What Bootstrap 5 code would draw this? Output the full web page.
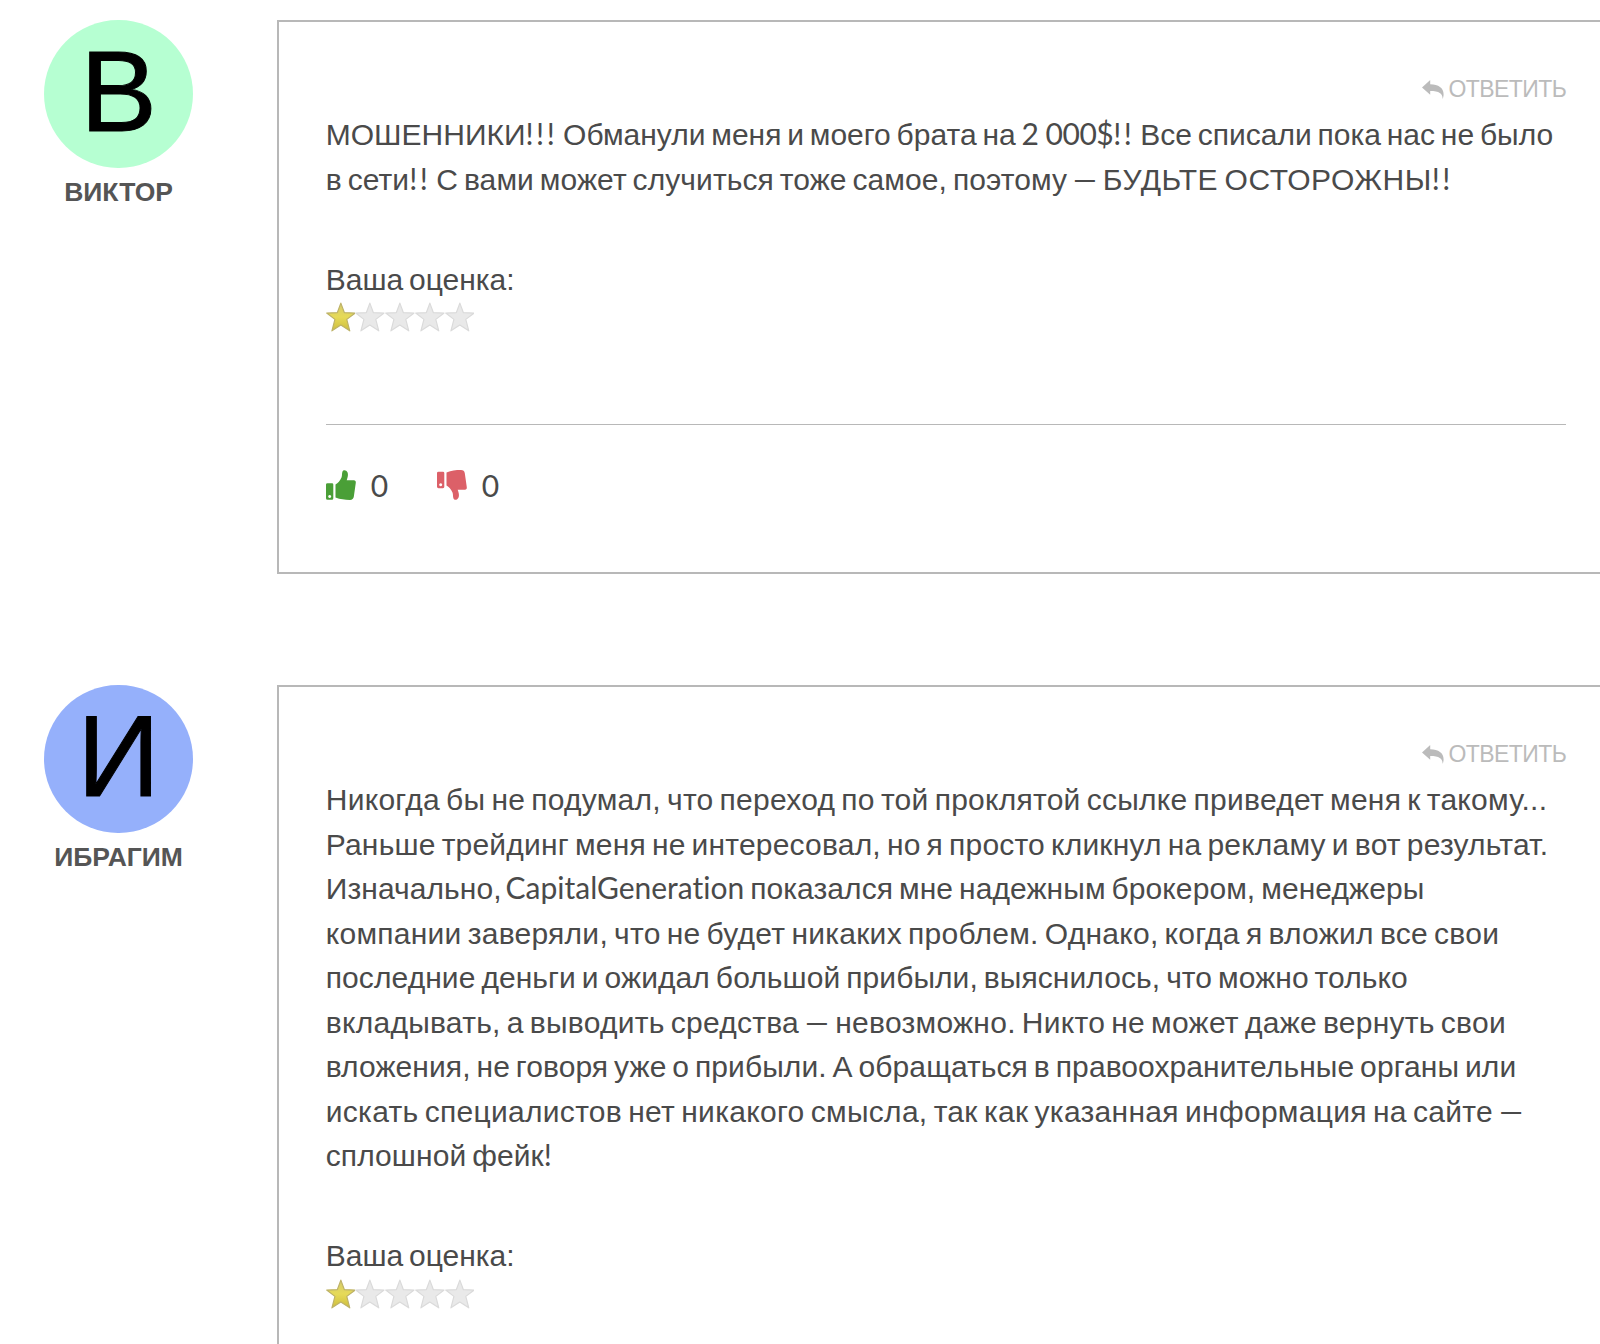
<!DOCTYPE html>
<html lang="ru">
<head>
  <meta charset="UTF-8" />
  <title>Отзывы</title>

  <!-- Bootstrap CSS -->
  <link
    href="https://cdn.jsdelivr.net/npm/bootstrap@5.3.3/dist/css/bootstrap.min.css"
    rel="stylesheet"
  />

  <style>
    html, body {
      height: 100%;
      overflow: hidden;
    }
    body {
      font-family: "Liberation Sans", Arial, sans-serif;
      font-size: 30px;
      line-height: 44.5px;
      color: #4a4a4a;
    }
    .icon-defs { position: absolute; width: 0; height: 0; }
    .review-list {
      padding: 19.6px 0 0 44.4px;
      gap: 110.6px;
    }
    .review-author {
      width: 148.4px;
      margin-right: 84.6px;
    }
    .avatar {
      width: 148.4px;
      height: 148.4px;
      font-size: 115px;
      line-height: 142px;
      color: #000;
      -webkit-text-stroke: 1px #000;
    }
    .avatar-green { background: #b6ffd2; }
    .avatar-blue { background: #95b0fb; }
    .author-name {
      font-size: 26.5px;
      line-height: 30px;
      margin-top: 9px;
      color: #555;
    }
    .review-box {
      width: 1340px;
      height: 554.4px;
      padding: 46px 0 0 46.4px;
      border: 2px solid #b8b8b8;
    }
    .review-box.tall { height: 659.4px; }
    .review-inner { width: 1240.6px; }
    .reply-link {
      height: 45.5px;
      padding-bottom: 2px;
      font-size: 23px;
      letter-spacing: -0.55px;
      color: #bbb;
    }
    .reply-link svg { width: 22px; height: 19px; margin-right: 4px; }
    .review-text, .rating { word-spacing: -2.5px; }
    .review-text > span { display: block; height: 44.5px; white-space: nowrap; }
    .latin {
      font-family: Lato, sans-serif;
      font-weight: 400;
      line-height: 1;
      font-variant-ligatures: none;
    }
    .brand { letter-spacing: 0; margin-left: -2px; }
    .bang { letter-spacing: 2.5px; }
    .digits { letter-spacing: -0.5px; word-spacing: 0; }
    .caps { letter-spacing: 0.55px; }
    .ls-1 { letter-spacing: 0.08px; }
    .ls-2 { letter-spacing: 0.2px; }
    .ls-3 { letter-spacing: 0.26px; }
    .ls-4 { letter-spacing: 0.3px; }
    .rating { margin-top: 55.5px; }
    .stars { height: 30px; }
    .stars svg { width: 29.7px; height: 30px; }
    .votes {
      margin-top: 91.5px;
      padding-top: 45px;
      border-top: 1px solid #b8b8b8;
    }
    .votes svg { width: 30px; height: 30px; margin-right: 15px; }
    .vote-count { width: 66px; }
  </style>
</head>
<body class="bg-white">
  <!-- Shared icons -->
  <svg class="icon-defs">
    <defs>
      <linearGradient id="gold" x1="0" y1="0" x2="0" y2="1">
        <stop offset="0" stop-color="#d5cb6c" />
        <stop offset="0.5" stop-color="#e6da58" />
        <stop offset="1" stop-color="#cdbd3c" />
      </linearGradient>
    </defs>
    <symbol id="star" viewBox="0 0 30 30">
      <path d="M15 1l3.500 9.500 11 .500-8.500 6.400L24 29l-9-6-9 6 3-11.600L.700 11l10.800-.500z" stroke-width="1.200" stroke-linejoin="round" />
    </symbol>
    <symbol id="reply" viewBox="0 0 22 19">
      <path d="M0 7.400L8.200 0v4.200C16.500 4.200 21.600 8 21.600 14.200c0 1.900-.4 3.400-1 4.800.2-5.300-3.500-7.900-12.400-7.900v3.700z" />
    </symbol>
    <symbol id="thumb-up" viewBox="0 0 30 30">
      <path fill-rule="evenodd" d="M1.500 13.300h4.500q1.300 0 1.300 1.300v13.600q0 1.500-1.300 1.500H1.500Q0 29.700 0 28.200V14.600q0-1.300 1.500-1.300zM3.700 24.900a1.500 1.500 0 1 0 .01 0z" />
      <path d="M9.500 14.500C12 13 14 11 15.500 7.500c.8-2 .2-4 1-6C17.100 0 19 0 20.200.8c2.200 1.500 2.300 5 .5 9.500h7.200c1.400 0 2.100 1.100 1.900 2.500l-2 14c-.3 2-1.600 3.100-3.800 3.100-5.500 0-9.500-.6-14.500-2.400z" />
    </symbol>
    <symbol id="thumb-down" viewBox="0 0 30 30">
      <path fill-rule="evenodd" d="M1.500 1.800h4.500q1.300 0 1.300 1.300v13.700q0 1.400-1.300 1.400H1.500Q0 18.200 0 16.800V3.100q0-1.300 1.500-1.300zM3.700 13.300a1.500 1.500 0 1 0 .01 0z" />
      <path transform="matrix(1 0 0 -1 0 30)" d="M9.500 14.500C12 13 14 11 15.500 7.500c.8-2 .2-4 1-6C17.100 0 19 0 20.200.8c2.200 1.500 2.300 5 .5 9.500h7.200c1.400 0 2.100 1.100 1.900 2.500l-2 14c-.3 2-1.600 3.100-3.800 3.100-5.500 0-9.500-.6-14.500-2.400z" />
    </symbol>
  </svg>

  <div class="review-list d-flex flex-column">
    <div class="d-flex align-items-start">
      <div class="review-author flex-shrink-0 text-center">
        <div class="avatar avatar-green rounded-circle">В</div>
        <div class="author-name fw-bold text-uppercase">Виктор</div>
      </div>
      <div class="review-box flex-shrink-0">
        <div class="review-inner">
          <div class="reply-link d-flex justify-content-end align-items-center text-uppercase">
            <svg fill="currentColor"><use href="#reply" /></svg>Ответить
          </div>
          <div class="review-text">
            <span>МОШЕННИКИ<b class="latin bang">!!!</b> Обманули меня и моего брата на <b class="latin digits">2 000$</b><b class="latin bang">!!</b> Все списали пока нас не было</span>
            <span class="ls-1">в сети<b class="latin bang">!!</b> С вами может случиться тоже самое, поэтому <b class="latin">—</b> <b class="caps fw-normal">БУДЬТЕ ОСТОРОЖНЫ</b><b class="latin bang">!!</b></span>
          </div>
          <div class="rating">Ваша оценка:</div>
          <div class="stars d-flex">
            <svg fill="url(#gold)" stroke="#bdb268"><use href="#star" /></svg>
            <svg fill="#e9e9e9" stroke="#dadada"><use href="#star" /></svg>
            <svg fill="#e9e9e9" stroke="#dadada"><use href="#star" /></svg>
            <svg fill="#e9e9e9" stroke="#dadada"><use href="#star" /></svg>
            <svg fill="#e9e9e9" stroke="#dadada"><use href="#star" /></svg>
          </div>
          <div class="votes d-flex align-items-center">
            <svg fill="#4a9f37"><use href="#thumb-up" /></svg>
            <span class="vote-count latin">0</span>
            <svg fill="#dc6068"><use href="#thumb-down" /></svg>
            <span class="vote-count latin">0</span>
          </div>
        </div>
      </div>
    </div>

    <div class="d-flex align-items-start">
      <div class="review-author flex-shrink-0 text-center">
        <div class="avatar avatar-blue rounded-circle">И</div>
        <div class="author-name fw-bold text-uppercase">Ибрагим</div>
      </div>
      <div class="review-box tall border-bottom-0 flex-shrink-0">
        <div class="review-inner">
          <div class="reply-link d-flex justify-content-end align-items-center text-uppercase">
            <svg fill="currentColor"><use href="#reply" /></svg>Ответить
          </div>
          <div class="review-text">
            <span class="ls-3">Никогда бы не подумал, что переход по той проклятой ссылке приведет меня к такому...</span>
            <span class="ls-2">Раньше трейдинг меня не интересовал, но я просто кликнул на рекламу и вот результат.</span>
            <span class="ls-1">Изначально, <b class="latin brand">CapitalGeneration</b> показался мне надежным брокером, менеджеры</span>
            <span class="ls-3">компании заверяли, что не будет никаких проблем. Однако, когда я вложил все свои</span>
            <span class="ls-1">последние деньги и ожидал большой прибыли, выяснилось, что можно только</span>
            <span class="ls-3">вкладывать, а выводить средства <b class="latin">—</b> невозможно. Никто не может даже вернуть свои</span>
            <span class="ls-1">вложения, не говоря уже о прибыли. А обращаться в правоохранительные органы или</span>
            <span class="ls-4">искать специалистов нет никакого смысла, так как указанная информация на сайте <b class="latin">—</b></span>
            <span class="ls-1">сплошной фейк<b class="latin bang">!</b></span>
          </div>
          <div class="rating">Ваша оценка:</div>
          <div class="stars d-flex">
            <svg fill="url(#gold)" stroke="#bdb268"><use href="#star" /></svg>
            <svg fill="#e9e9e9" stroke="#dadada"><use href="#star" /></svg>
            <svg fill="#e9e9e9" stroke="#dadada"><use href="#star" /></svg>
            <svg fill="#e9e9e9" stroke="#dadada"><use href="#star" /></svg>
            <svg fill="#e9e9e9" stroke="#dadada"><use href="#star" /></svg>
          </div>
        </div>
      </div>
    </div>
  </div>

  <!-- Bootstrap JS -->
  <script src="https://cdn.jsdelivr.net/npm/bootstrap@5.3.3/dist/js/bootstrap.bundle.min.js"></script>
</body>
</html>
